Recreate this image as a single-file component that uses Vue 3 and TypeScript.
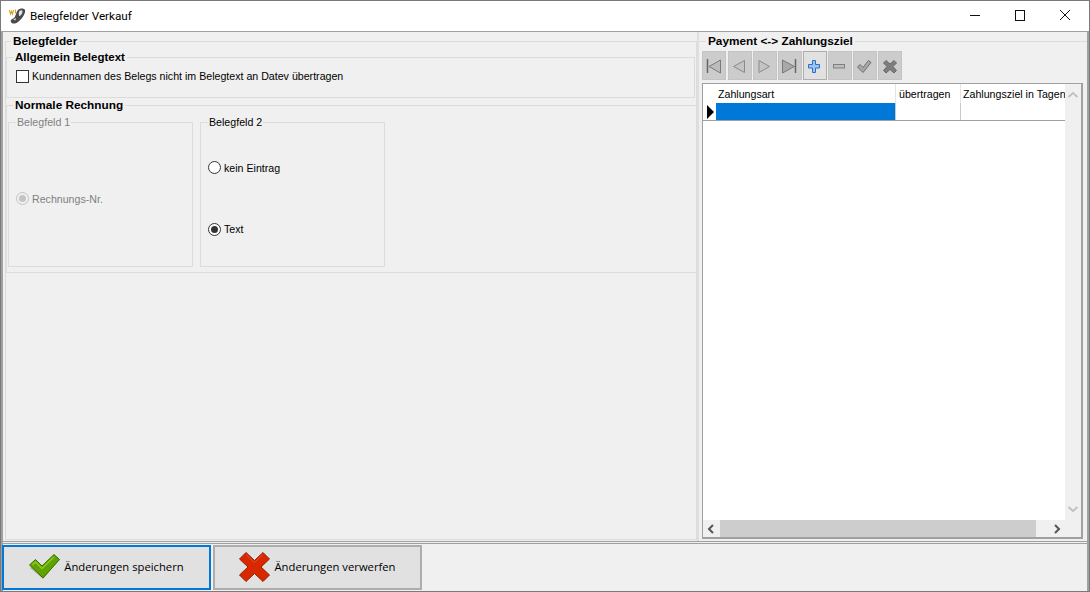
<script setup lang="ts">
interface NavButton {
  id: string;
  active?: boolean;
}

const navButtons: NavButton[] = [
  { id: 'first' },
  { id: 'prev' },
  { id: 'next' },
  { id: 'last' },
  { id: 'add', active: true },
  { id: 'remove' },
  { id: 'post' },
  { id: 'cancel' },
];

const columns = ['Zahlungsart', 'übertragen', 'Zahlungsziel in Tagen'];
</script>

<template>
  <div class="window">
    <header class="titlebar">
      <svg class="app-icon" width="18" height="18" viewBox="0 0 18 18">
        <path d="M10 3c2-2 6-2 7 0 1 3-3 9-7 12-3 2-6 2-7 0-1-2 1-3 3-4 2-2 2-6 4-8z" fill="#4a4a4a" />
        <path d="M11.500 4c1-1 3-1 3 .5 0 2-2 4.500-3 4.500s-1-4 0-5z" fill="#e4e4e4" />
        <path d="M5 12.500l3-1.500-.5 2.500z" fill="#d0d0d0" />
        <path d="M1.500 3l1 4 1-2.500 1 2.500 1-4" fill="none" stroke="#d9a020" stroke-width="1.100" />
        <path d="M7.500 2.500v4" stroke="#d9a020" stroke-width="1.100" />
      </svg>
      <span class="title">Belegfelder Verkauf</span>
      <div class="window-controls">
        <svg width="46" height="30" viewBox="0 0 46 30"><path d="M20 14.500h10" stroke="#111" /></svg>
        <svg width="46" height="30" viewBox="0 0 46 30"><rect x="19.500" y="9.500" width="9" height="10" fill="none" stroke="#111" /></svg>
        <svg width="46" height="30" viewBox="0 0 46 30"><path d="M18 9l10 10M28 9L18 19" stroke="#111" /></svg>
      </div>
    </header>

    <div class="client">
      <main class="panels">
        <section class="left">
          <fieldset class="group outer">
            <legend>Belegfelder</legend>

            <fieldset class="group general">
              <legend>Allgemein Belegtext</legend>
              <label class="check-row">
                <span class="checkbox"></span>
                Kundennamen des Belegs nicht im Belegtext an Datev übertragen
              </label>
            </fieldset>

            <fieldset class="group invoice">
              <legend>Normale Rechnung</legend>
              <div class="field-row">
                <fieldset class="box disabled">
                  <legend>Belegfeld 1</legend>
                  <label class="radio-row">
                    <span class="radio checked"></span>
                    Rechnungs-Nr.
                  </label>
                </fieldset>
                <fieldset class="box">
                  <legend>Belegfeld 2</legend>
                  <label class="radio-row">
                    <span class="radio"></span>
                    kein Eintrag
                  </label>
                  <label class="radio-row">
                    <span class="radio checked"></span>
                    Text
                  </label>
                </fieldset>
              </div>
            </fieldset>
          </fieldset>
        </section>

        <section class="right">
          <fieldset class="group payment">
            <legend>Payment &lt;-&gt; Zahlungsziel</legend>

            <div class="navigator">
              <button
                v-for="btn in navButtons"
                :key="btn.id"
                class="nav-btn"
                :class="{ active: btn.active }"
              >
                <svg width="20" height="20" viewBox="0 0 20 20">
                  <template v-if="btn.id === 'first'">
                    <path d="M3.500 3v14" stroke="#666" stroke-width="1.500" />
                    <path d="M16.500 4v13L5 10.500z" fill="#bcbcbc" stroke="#7a7a7a" />
                  </template>
                  <path v-else-if="btn.id === 'prev'" d="M14.500 4.500v12L3.500 10.500z" fill="#c4c4c4" stroke="#8a8a8a" />
                  <path v-else-if="btn.id === 'next'" d="M4 4.500v12l10.500-6z" fill="#c4c4c4" stroke="#8a8a8a" />
                  <template v-else-if="btn.id === 'last'">
                    <path d="M15.500 3v14" stroke="#666" stroke-width="1.500" />
                    <path d="M2.500 4v13L14.500 10.500z" fill="#a8a8a8" stroke="#7a7a7a" />
                  </template>
                  <path
                    v-else-if="btn.id === 'add'"
                    d="M7.500 4.500h3v4h4v3.500h-4v4.500h-3V12h-4V8.500h4z"
                    fill="#9cc3f2"
                    stroke="#2c6fc4"
                  />
                  <rect v-else-if="btn.id === 'remove'" x="3.500" y="8.500" width="11" height="3.500" fill="#bdbdbd" stroke="#808080" />
                  <path
                    v-else-if="btn.id === 'post'"
                    d="M2.500 11l2.500-2.500 3 3 5.500-7 2.500 2-8 10z"
                    fill="#a8a8a8"
                    stroke="#6e6e6e"
                  />
                  <path
                    v-else
                    d="M6 4.500l4 3.500 4-3.500 2.500 2.500-3.500 3.500 3.500 4-2.500 2.500-4-3.500-4 3.500-2.500-2.500 3.500-4L3.500 7z"
                    fill="#7d7d7d"
                    stroke="#6a6a6a"
                  />
                </svg>
              </button>
            </div>

            <div class="grid">
              <div class="grid-body">
                <div class="grid-head">
                  <span class="indicator"></span>
                  <span v-for="col in columns" :key="col" class="head-cell">{{ col }}</span>
                </div>
                <div class="grid-row">
                  <span class="indicator"><i class="arrow"></i></span>
                  <span class="cell selected"></span>
                  <span class="cell"></span>
                  <span class="cell last"></span>
                </div>
              </div>
              <div class="vscroll">
                <svg width="16" height="16" viewBox="0 0 16 16"><path d="M3.500 10L8 6l4.500 4" fill="none" stroke="#c2c2c2" stroke-width="2" /></svg>
                <svg width="16" height="16" viewBox="0 0 16 16"><path d="M3.500 6L8 10l4.500-4" fill="none" stroke="#c2c2c2" stroke-width="2" /></svg>
              </div>
              <div class="hscroll">
                <svg width="17" height="16" viewBox="0 0 17 16"><path d="M10 4L6 8l4 4" fill="none" stroke="#555" stroke-width="2" /></svg>
                <div class="track"><div class="thumb"></div></div>
                <svg width="17" height="16" viewBox="0 0 17 16"><path d="M7 4l4 4-4 4" fill="none" stroke="#555" stroke-width="2" /></svg>
              </div>
            </div>
          </fieldset>
        </section>
      </main>

      <footer class="actions">
        <button class="action focused">
          <svg width="31" height="26" viewBox="0 0 31 26">
            <path d="M3 13l-2 1 13 11 16-19-1-1-15 17z" fill="#b4b4b4" />
            <path d="M.500 11l6-5.500 6.500 6.500L25 .500l5.500 5L14 24z" fill="#5fa300" stroke="#3d6d00" />
            <path d="M3 11l3.500-3 6.500 6.500L25 3" fill="none" stroke="#8ccb22" stroke-width="1.500" />
          </svg>
          Änderungen speichern
        </button>
        <button class="action">
          <svg width="31" height="30" viewBox="0 0 31 30">
            <path d="M7 .500l8.500 8 8.500-8 6.500 6.500-8.500 8 8.500 8-6.500 6.500-8.500-8-8.500 8L.500 23l8.500-8-8.500-8z" fill="#d92800" stroke="#8f2000" />
            <path d="M7 2.500l8.500 8 8.500-8" fill="none" stroke="#e8502a" />
          </svg>
          Änderungen verwerfen
        </button>
      </footer>
    </div>
  </div>
</template>

<style>
html,
body {
  margin: 0;
  overflow: hidden;
}
</style>

<style scoped>
.window {
  width: 1090px;
  height: 592px;
  box-sizing: border-box;
  border: 1px solid #7a7a7a;
  display: flex;
  flex-direction: column;
  background: #f0f0f0;
  font-family: "Liberation Sans", Arial, sans-serif;
  font-size: 10.630px;
  color: #000;
}

.titlebar {
  height: 30px;
  flex: none;
  background: #fff;
  display: flex;
  align-items: center;
  padding-left: 7px;
}

.app-icon {
  margin-right: 4px;
}

.title {
  font-family: Roboto, "Noto Sans", sans-serif;
  font-size: 11.700px;
}

.window-controls {
  margin-left: auto;
  margin-right: 1px;
  display: flex;
}

.window-controls svg {
  display: block;
}

.client {
  flex: 1;
  min-height: 0;
  display: flex;
  flex-direction: column;
  border-top: 1px solid #a0a0a0;
  border-left: 2px solid #a0a0a0;
  border-right: 2px solid #a0a0a0;
}

.panels {
  flex: 1;
  min-height: 0;
  display: flex;
  border-bottom: 3px double #a0a0a0;
}

.left {
  width: 696px;
  flex: none;
  padding: 3px 0 0 2px;
  box-sizing: border-box;
  border-right: 2px solid #dedede;
}

.right {
  flex: 1;
  min-width: 0;
  padding-top: 3px;
}

fieldset {
  margin: 0;
  min-width: 0;
  box-sizing: border-box;
  padding: 0;
}

.group {
  border: 1px solid #dcdcdc;
}

.group > legend {
  font-weight: bold;
  font-size: 11.800px;
  line-height: 13px;
  padding: 0 2px;
  margin-left: 7px;
}

.outer {
  height: 505px;
}

.outer > legend {
  margin-left: 5px;
}

.general {
  height: 47px;
  margin: 3px 1px 0 0;
}

.general > legend,
.invoice > legend {
  margin-left: 6px;
}

.general > legend {
  font-size: 11.500px;
}

.check-row {
  display: flex;
  align-items: center;
  gap: 3px;
  margin: 5px 0 0 9px;
  height: 14px;
}

.checkbox {
  width: 11px;
  height: 11px;
  border: 1px solid #333;
  background: #fff;
  flex: none;
}

.invoice {
  height: 174px;
  margin: 1px -1px 0 0;
}

.field-row {
  display: flex;
  gap: 7px;
  padding: 4px 0 0 1px;
}

.box {
  width: 185px;
  height: 151px;
  border: 1px solid #dcdcdc;
  display: flex;
  flex-direction: column;
  justify-content: space-around;
  padding: 8px 0 6px;
}

.box > legend {
  line-height: 13px;
  padding: 0 1px;
  margin-left: 7px;
}

.box.disabled {
  color: #7f7f7f;
}

.radio-row {
  display: flex;
  align-items: center;
  gap: 3px;
  padding-left: 7px;
  height: 14px;
}

.radio {
  width: 11px;
  height: 11px;
  border: 1px solid #333;
  border-radius: 50%;
  background: #fff;
  position: relative;
  flex: none;
}

.radio.checked::after {
  content: '';
  position: absolute;
  left: 2px;
  top: 2px;
  width: 7px;
  height: 7px;
  border-radius: 50%;
  background: #333;
}

.disabled .radio {
  border-color: #c4c4c4;
  background: #f0f0f0;
}

.disabled .radio.checked::after {
  background: #c4c4c4;
}

.payment {
  height: 505px;
  border-right: 0;
  border-bottom: 0;
  border-left: 0;
}

.navigator {
  display: flex;
  gap: 1px;
  padding: 3px 0 0 3px;
  height: 29px;
}

.nav-btn {
  width: 24px;
  height: 29px;
  box-sizing: border-box;
  padding: 0;
  background: #cccccc;
  border: 1px solid #c4c4c4;
  display: flex;
  align-items: center;
  justify-content: center;
}

.nav-btn:first-child {
  margin-right: 1px;
}

.nav-btn.active {
  background: #e1e1e1;
  border-color: #adadad;
}

.grid {
  margin: 3px 0 0 3px;
  width: 381px;
  height: 456px;
  box-sizing: border-box;
  border: 1px solid #a0a0a0;
  border-right-width: 2px;
  border-bottom-width: 2px;
  background: #fff;
  display: grid;
  grid-template-columns: 362px 16px;
  grid-template-rows: 1fr 17px;
}

.grid-body {
  overflow: hidden;
  min-width: 0;
}

.grid-head,
.grid-row {
  display: grid;
  grid-template-columns: 13px 180px 65px 1fr;
}

.grid-head {
  height: 19px;
}

.head-cell {
  padding: 4px 0 0 3px;
  white-space: nowrap;
  overflow: hidden;
  border-right: 1px solid #e4e4e4;
}

.head-cell:nth-child(2) {
  padding-left: 2px;
}

.head-cell:last-child {
  padding-left: 2px;
  border-right: 0;
}

.grid-row {
  height: 18px;
  border-bottom: 1px solid #a0a0a0;
  box-sizing: border-box;
}

.indicator {
  display: flex;
  align-items: center;
  padding-left: 4px;
}

.arrow {
  display: block;
  border-left: 7px solid #000;
  border-top: 7px solid transparent;
  border-bottom: 7px solid transparent;
}

.cell {
  border-right: 1px solid #c8c8c8;
}

.cell.selected {
  background: #0078d7;
}

.cell.last {
  border-right: 0;
}

.vscroll {
  background: #f0f0f0;
  grid-row: 1 / span 2;
  grid-column: 2;
  display: flex;
  flex-direction: column;
  justify-content: space-between;
  padding: 3px 0 20px;
}

.hscroll {
  grid-row: 2;
  grid-column: 1;
  background: #f0f0f0;
  display: flex;
  align-items: center;
}

.track {
  flex: 1;
  height: 17px;
}

.thumb {
  width: 316px;
  height: 17px;
  background: #cdcdcd;
}

.actions {
  height: 47px;
  flex: none;
  display: flex;
  gap: 2px;
  padding-top: 1px;
  margin-left: -1px;
  box-sizing: border-box;
}

.action {
  width: 209px;
  height: 45px;
  box-sizing: border-box;
  background: #e1e1e1;
  border: 2px solid #adadad;
  display: flex;
  align-items: center;
  justify-content: center;
  gap: 4px;
  font-family: "Open Sans", "Noto Sans", sans-serif;
  font-size: 11.250px;
  color: #000;
  padding: 0 0 2px;
}

.action.focused {
  border-color: #0078d7;
}
</style>
